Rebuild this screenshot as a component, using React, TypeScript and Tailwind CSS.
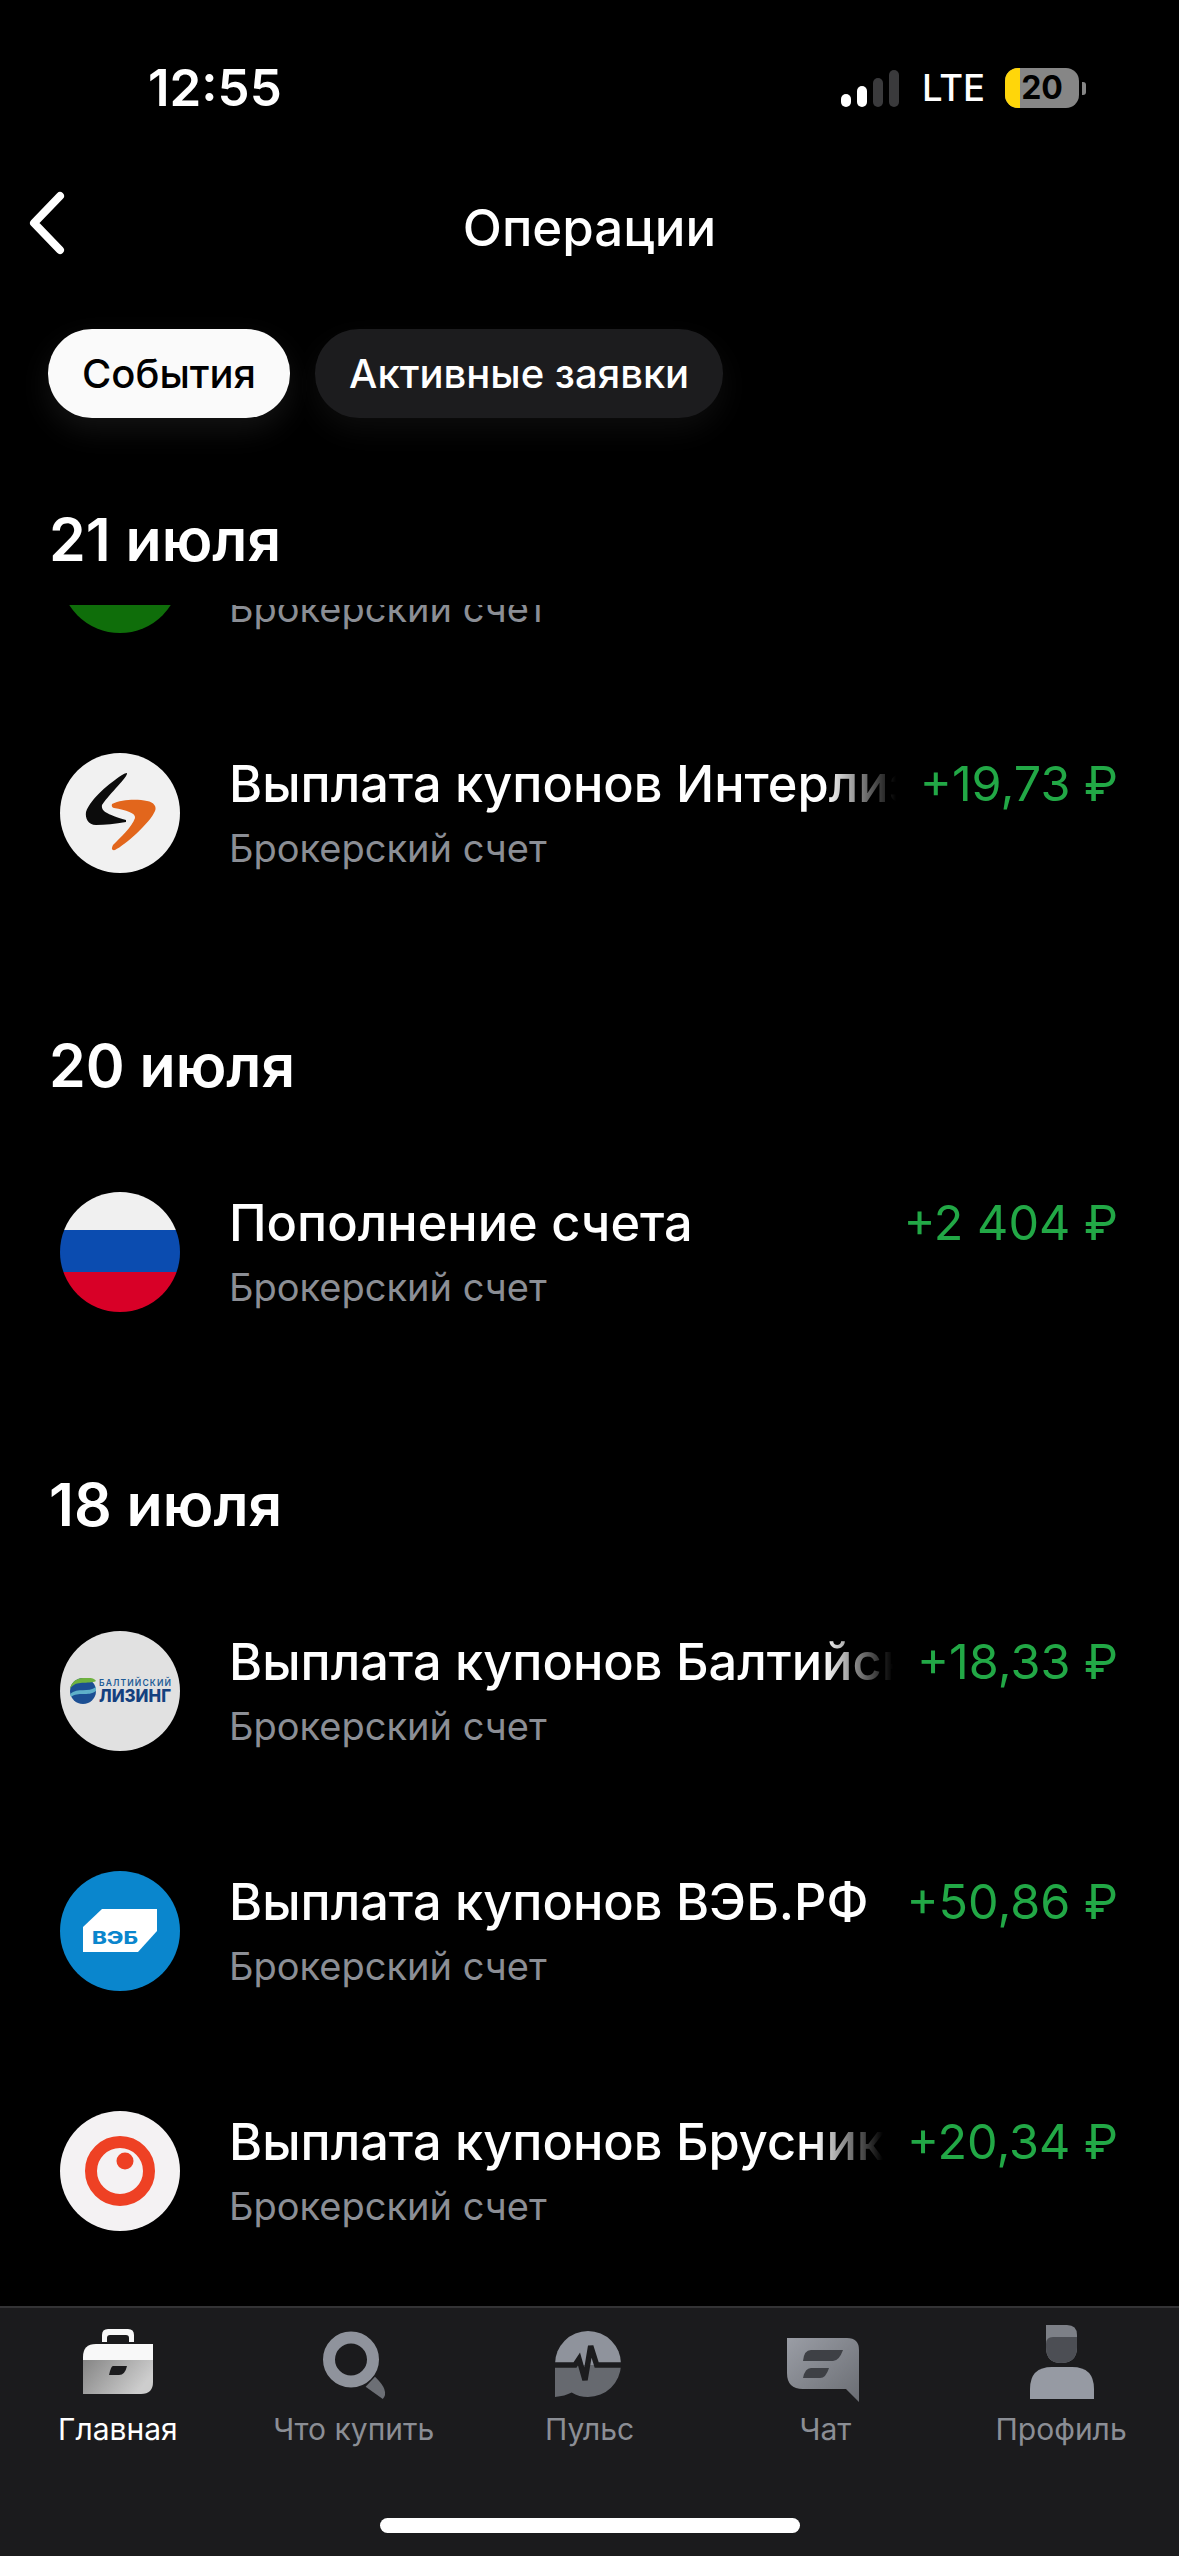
import React from "react";

const sans = "font-['Inter','Liberation_Sans',sans-serif]";

function Interlizing() {
    return (
        <svg viewBox="0 0 120 120" className="w-full h-full">
            <circle cx="60" cy="60" r="60" fill="#f1f1f1" />
            <path d="M67 20C68 24 50 40 42 52C41 58 46 61 66 67L66 69C55 71 45 72 36 72C28 72 25 65 26 59C31 45 50 30 62 22Q65 20 67 20Z" fill="#0c0c0c" />
            <path d="M52 51C62 46 78 46 87 48C94 49 97 54 95 58C90 70 65 92 55 97Q50 98 53 92C60 85 72 74 75 65C76 60 66 57 54 55Q51 54 52 51Z" fill="#e2661c" />
        </svg>
    );
}

function Flag() {
    return (
        <div className="w-full h-full rounded-full overflow-hidden flex flex-col">
            <div className="h-[38px] bg-[#f0f0f0]"></div>
            <div className="h-[42px] bg-[#0b4cb0]"></div>
            <div className="flex-1 bg-[#d80027]"></div>
        </div>
    );
}

function Baltic() {
    return (
        <svg viewBox="0 0 120 120" className="w-full h-full">
            <circle cx="60" cy="60" r="60" fill="#e1e1e1" />
            <circle cx="23" cy="60" r="13" fill="#1c4f93" />
            <path d="M10 58C16 48 28 54 36 50C34 46 28 47 23 47C16 47 11 52 10 58Z" fill="#6fb23f" />
            <path d="M10 63C18 56 28 62 36 56L36 60C28 66 18 60 11 66Z" fill="#5fb0c9" />
            <text x="39" y="55" fontSize="8.5" fontWeight="600" fill="#1f5c96" textLength="72" fontFamily="Inter, sans-serif">БАЛТИЙСКИЙ</text>
            <text x="39" y="71" fontSize="18" fontWeight="800" fill="#14407f" textLength="72" lengthAdjust="spacingAndGlyphs" fontFamily="Inter, sans-serif">ЛИЗИНГ</text>
        </svg>
    );
}

function Veb() {
    return (
        <svg viewBox="0 0 120 120" className="w-full h-full">
            <circle cx="60" cy="60" r="60" fill="#0a86cd" />
            <path d="M23 56L42 38H97V60L78 81H23Z" fill="#fff" />
            <text x="32" y="73" fontSize="17" fontWeight="800" fill="#0a86cd" textLength="46" lengthAdjust="spacingAndGlyphs" fontFamily="Inter, sans-serif">ВЭБ</text>
        </svg>
    );
}

function Brusnika() {
    return (
        <svg viewBox="0 0 120 120" className="w-full h-full">
            <circle cx="60" cy="60" r="60" fill="#f4f2f3" />
            <circle cx="60" cy="60" r="29" fill="none" stroke="#ee4124" strokeWidth="12" />
            <circle cx="65" cy="50" r="8.5" fill="#ee4124" />
        </svg>
    );
}

const rows = {
    green: { title: "Выплата купонов", amount: "", icon: <div className="w-full h-full rounded-full bg-[#0f6e0a]"></div>, fade: false },
    inter: { title: "Выплата купонов Интерлизинг", amount: "+19,73 ₽", icon: <Interlizing />, fade: true },
    flag: { title: "Пополнение счета", amount: "+2 404 ₽", icon: <Flag />, fade: false },
    baltic: { title: "Выплата купонов Балтийский лизинг", amount: "+18,33 ₽", icon: <Baltic />, fade: true },
    veb: { title: "Выплата купонов ВЭБ.РФ", amount: "+50,86 ₽", icon: <Veb />, fade: false },
    brusnika: { title: "Выплата купонов Брусника", amount: "+20,34 ₽", icon: <Brusnika />, fade: true },
};

function Row({ item }: { item: (typeof rows)["inter"] }) {
    return (
        <div className="h-[240px] flex items-center pl-[60px] pr-[61px]">
            <div className="w-[120px] h-[120px] shrink-0">{item.icon}</div>
            <div className="flex-1 min-w-0 ml-[49px]">
                <div className="flex items-center">
                    <div
                        className={
                            item.fade
                                ? "flex-1 min-w-0 overflow-hidden whitespace-nowrap text-[50.5px] leading-[60px] font-medium [mask-image:linear-gradient(to_right,black_calc(100%-70px),transparent)]"
                                : "flex-1 min-w-0 overflow-hidden whitespace-nowrap text-[50.5px] leading-[60px] font-medium"
                        }
                    >
                        {item.title}
                    </div>
                    <div className="shrink-0 pl-[24px] text-[48.5px] leading-[60px] text-[#22a846]">{item.amount}</div>
                </div>
                <div className="mt-[9px] text-[38px] leading-[50px] text-[#8b8e95]">Брокерский счет</div>
            </div>
        </div>
    );
}

function DateHead({ children }: { children: React.ReactNode }) {
    return <div className="h-[199px] pt-[101px] pl-[49px] text-[59px] leading-[64px] font-semibold">{children}</div>;
}

function HomeIcon() {
    return (
        <svg viewBox="0 0 100 90" className="w-[100px] h-[90px]">
            <defs>
                <linearGradient id="homeLow" x1="0" y1="0" x2="1" y2="0.4">
                    <stop offset="0" stopColor="#858585" />
                    <stop offset="1" stopColor="#cdcdcd" />
                </linearGradient>
            </defs>
            <path d="M34 19V12Q34 6 40 6H60Q66 6 66 12V19H61V15Q61 12 58 12H42Q39 12 39 15V19Z" fill="#f8f8f8" />
            <path d="M28 21H85V37H15V34Q15 21 28 21Z" fill="#f8f8f8" />
            <path d="M15 37H85V59Q85 71 73 71H15Z" fill="url(#homeLow)" />
            <path d="M45 43H59Q57 52 51 52H41Q43 43 45 43Z" fill="#1c1c1e" />
        </svg>
    );
}

function SearchIcon() {
    return (
        <svg viewBox="0 0 100 90" className="w-[100px] h-[90px]">
            <path d="M61.6 63.7L78.8 76Q86 68 71 53.7Z" fill="#6c6f75" />
            <circle cx="47" cy="36.5" r="22" fill="none" stroke="#8f939c" strokeWidth="12" />
        </svg>
    );
}

function PulseIcon() {
    return (
        <svg viewBox="0 0 100 90" className="w-[100px] h-[90px]">
            <path d="M16 41A33 33 0 0 1 82 41V42H16Z" fill="#8f939c" />
            <path d="M16 42V74Q26 73 32.7 69.5Q40 74 49 74A33 33 0 0 0 82 42Z" fill="#66696f" />
            <path d="M16 42H36L40 36L46 57L51.7 23L57.7 42H82" fill="none" stroke="#1c1c1e" strokeWidth="5.5" />
        </svg>
    );
}

function ChatIcon() {
    return (
        <svg viewBox="0 0 100 90" className="w-[100px] h-[90px]">
            <defs>
                <linearGradient id="chatFill" x1="0" y1="0" x2="1" y2="1">
                    <stop offset="0" stopColor="#9a9da5" />
                    <stop offset="1" stopColor="#6a6d73" />
                </linearGradient>
            </defs>
            <path d="M12 15H72Q84 15 84 27V79L71 66H28Q12 66 12 50Z" fill="url(#chatFill)" />
            <path d="M36 27H68Q64 38 58 38H28Q29 27 36 27Z" fill="#3e4045" />
            <path d="M36 45H54Q51 55 45 55H28Q30 45 36 45Z" fill="#3e4045" />
        </svg>
    );
}

function ProfileIcon() {
    return (
        <svg viewBox="0 0 100 90" className="w-[100px] h-[90px]">
            <path d="M35 2H56Q66 2 66 12V24Q66 40 50 40Q35 40 35 24Z" fill="#7d8087" />
            <path d="M42 14H66V24Q66 40 50 40Q35 40 35 24V21Q35 14 42 14Z" fill="#4c4e54" />
            <path d="M19 76V66Q19 44 41 44H61Q83 44 83 66V76Z" fill="#969aa3" />
        </svg>
    );
}

const tabs = [
    { label: "Главная", icon: <HomeIcon />, active: true },
    { label: "Что купить", icon: <SearchIcon />, active: false },
    { label: "Пульс", icon: <PulseIcon />, active: false },
    { label: "Чат", icon: <ChatIcon />, active: false },
    { label: "Профиль", icon: <ProfileIcon />, active: false },
];

export default function App() {
    return (
        <div className={`w-[1179px] h-[2556px] bg-black text-white flex flex-col overflow-hidden ${sans}`}>
            {/* status bar */}
            <div className="h-[176px] shrink-0 flex items-center justify-between pl-[148px] pr-[93px] -mb-[36px]">
                <div className="text-[51px] leading-[56px] font-semibold">12:55</div>
                <div className="flex items-center">
                    <div className="flex items-end gap-[6px] h-[37px]">
                        <div className="w-[10px] h-[13px] rounded-[5px] bg-white"></div>
                        <div className="w-[10px] h-[21px] rounded-[5px] bg-white"></div>
                        <div className="w-[10px] h-[29px] rounded-[5px] bg-[#3a3a3c]"></div>
                        <div className="w-[10px] h-[37px] rounded-[5px] bg-[#3a3a3c]"></div>
                    </div>
                    <div className="ml-[23px] w-[61px] text-[36.5px] leading-[46px] font-medium">LTE</div>
                    <div className="relative ml-[22px] w-[74px] h-[40px] rounded-[13px] overflow-hidden flex bg-[#868686]">
                        <div className="w-[15px] bg-[#ffd60a]"></div>
                        <div className="absolute inset-0 flex items-center justify-center text-[32px] leading-[40px] font-bold text-black">20</div>
                    </div>
                    <div className="ml-[3px] w-[4px] h-[13px] rounded-r-[3px] bg-[#868686]"></div>
                </div>
            </div>

            {/* header */}
            <div className="h-[176px] shrink-0 relative flex items-center justify-center">
                <svg viewBox="0 0 40 64" className="absolute left-[27px] top-[51px] w-[40px] h-[64px]">
                    <path d="M33 5L7 32L33 59" fill="none" stroke="#fff" strokeWidth="8" strokeLinecap="round" strokeLinejoin="round" />
                </svg>
                <div className="text-[51px] leading-[60px] font-medium">Операции</div>
            </div>

            {/* tabs */}
            <div className="shrink-0 mt-[13px] flex gap-[25px] pl-[48px]">
                <div className="h-[89px] px-[34px] rounded-[44px] bg-[#fafafa] text-black flex items-center text-[40px] font-medium shadow-[0_12px_30px_rgba(255,255,255,0.08)]">События</div>
                <div className="h-[89px] px-[34px] rounded-[44px] bg-[#1c1c1e] flex items-center text-[40px] font-medium shadow-[0_12px_30px_rgba(255,255,255,0.05)]">Активные заявки</div>
            </div>

            <div className="h-[187px] shrink-0 pt-[90px] pl-[49px] text-[59px] leading-[64px] font-semibold">21 июля</div>

            {/* list */}
            <div className="flex-1 min-h-0 overflow-hidden">
                <div className="-mt-[152px]">
                    <Row item={rows.green} />
                    <Row item={rows.inter} />
                    <DateHead>20 июля</DateHead>
                    <Row item={rows.flag} />
                    <DateHead>18 июля</DateHead>
                    <Row item={rows.baltic} />
                    <Row item={rows.veb} />
                    <Row item={rows.brusnika} />
                </div>
            </div>

            {/* bottom nav */}
            <div className="h-[250px] shrink-0 bg-[#1b1b1d] border-t-2 border-[#333335] flex flex-col">
                <div className="grid grid-cols-5 pt-[15px]">
                    {tabs.map((t) => (
                        <div key={t.label} className="flex flex-col items-center">
                            {t.icon}
                            <div className={t.active ? "-mt-[2px] text-[30px] leading-[36px] text-white" : "-mt-[2px] text-[30px] leading-[36px] text-[#8b8e95]"}>{t.label}</div>
                        </div>
                    ))}
                </div>
                <div className="mt-[71px] mx-auto w-[420px] h-[15px] rounded-full bg-white"></div>
            </div>
        </div>
    );
}
